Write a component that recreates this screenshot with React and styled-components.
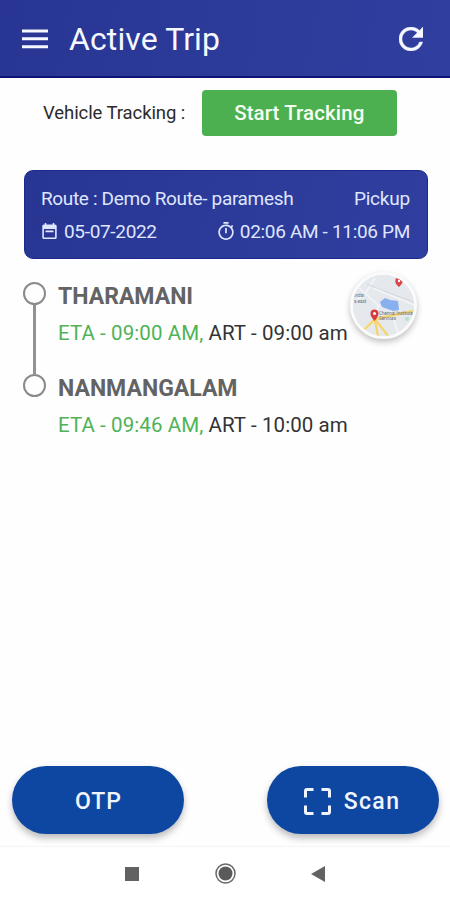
import React from 'react';
import styled, { createGlobalStyle } from 'styled-components';

const GlobalStyle = createGlobalStyle`
  * { box-sizing: border-box; }
  body {
    margin: 0;
    background: #fefefe;
    font-family: Roboto, sans-serif;
  }
  svg { display: block; flex: none; }
`;

const Screen = styled.div`
  width: 450px;
  height: 900px;
  display: flex;
  flex-direction: column;
  overflow: hidden;
`;

const AppBar = styled.header`
  height: 78px;
  flex: none;
  display: flex;
  align-items: center;
  padding: 2px 27.5px 0 22px;
  background: linear-gradient(100deg, #283593, #303f9f);
  border-bottom: 2px solid #0c1474;
  color: #f6f8ff;
`;

const Title = styled.h1`
  flex: 1;
  margin: 0 0 0 21px;
  font-size: 32px;
  font-weight: 400;
  line-height: 40px;
  letter-spacing: 0.1px;
`;

const TrackingRow = styled.section`
  display: flex;
  align-items: center;
  height: 46px;
  margin: 11.5px 53.5px 0 43px;
  justify-content: space-between;
`;

const TrackingLabel = styled.span`
  font-size: 18.5px;
  color: #2b2b2b;
  letter-spacing: -0.08px;
  white-space: nowrap;
`;

const TrackingButton = styled.button`
  width: 194.5px;
  height: 46px;
  border: 0;
  border-radius: 4px;
  background: #4caf50;
  color: #f5fff2;
  font: 500 20.5px Roboto, sans-serif;
  letter-spacing: 0.1px;
  padding: 0;
`;

const RouteCard = styled.section`
  margin: 34.5px 22.5px 0 23.5px;
  height: 89px;
  padding: 10.5px 16.5px;
  display: flex;
  flex-direction: column;
  border-radius: 9px;
  border: 1px solid #1c2a8c;
  background: linear-gradient(100deg, #283593, #303f9f);
`;

const CardRow = styled.div`
  height: 33px;
  flex: none;
  display: flex;
  align-items: center;
  justify-content: space-between;
  color: #dfe6ff;
`;

const CardText = styled.span`
  display: flex;
  align-items: center;
  gap: 6px;
  font-size: 19px;
  white-space: nowrap;
  letter-spacing: ${(p) => p.$spacing || 0}px;
`;

const TripBody = styled.section`
  display: flex;
  justify-content: space-between;
  padding: 23px 33px 0 23px;
  height: 185px;
`;

const Stops = styled.ol`
  list-style: none;
  margin: 0;
  padding: 0;
`;

const Stop = styled.li`
  display: flex;
  height: 92px;
`;

const Rail = styled.div`
  width: 23px;
  margin-right: 12px;
  display: flex;
  flex-direction: column;
  align-items: center;
`;

const Node = styled.span`
  width: 23px;
  height: 23px;
  flex: none;
  border: 2.5px solid #8a8a8a;
  border-radius: 50%;
`;

const Connector = styled.span`
  width: 2.5px;
  flex: 1;
  background: #929292;
`;

const StopInfo = styled.div`
  display: flex;
  flex-direction: column;
  padding-top: 1px;
  white-space: nowrap;
`;

const StopName = styled.span`
  font-size: 23px;
  font-weight: 700;
  line-height: 28px;
  color: #636363;
`;

const Times = styled.span`
  margin-top: 9px;
  font-size: 20.5px;
  line-height: 26px;
  color: #333;
  letter-spacing: 0.09px;
`;

const Eta = styled.span`
  color: #4fb257;
`;

const MapButton = styled.button`
  width: 67px;
  height: 67px;
  margin-top: -10px;
  padding: 0;
  border: 3px solid #fbfbfb;
  border-radius: 50%;
  overflow: hidden;
  background: #e5e8ec;
  box-shadow: 0 3px 6px rgba(0, 0, 0, 0.25);
`;

const Actions = styled.footer`
  margin-top: auto;
  height: 80px;
  flex: none;
  display: flex;
  justify-content: space-between;
  padding: 0 11px 0 12px;
`;

const ActionButton = styled.button`
  width: 172px;
  height: 68px;
  display: flex;
  align-items: center;
  justify-content: center;
  gap: 13px;
  padding: 2px ${(p) => p.$shift || 0}px 0 1px;
  border: 0;
  border-radius: 34px;
  background: #0d47a1;
  color: #f0f5ff;
  font: 500 23px Roboto, sans-serif;
  letter-spacing: ${(p) => p.$spacing}px;
  box-shadow: 0 4px 7px rgba(0, 0, 0, 0.27);
`;

const SystemNav = styled.nav`
  height: 54px;
  flex: none;
  display: flex;
  align-items: center;
  padding-left: 125px;
  border-top: 1px solid #f5f5f5;
  background: #fff;
`;

const NavKey = styled.span`
  margin-right: ${(p) => p.$after || 0}px;
`;

const MenuIcon = () => (
  <svg width="26" height="20" viewBox="0 0 26 20" fill="currentColor">
    <path d="M0 .5h26v3H0zM0 8.3h26v3H0zM0 16.2h26v3H0z" />
  </svg>
);

const RefreshIcon = () => (
  <svg width="24" height="24" viewBox="4 4 16 16" fill="currentColor" stroke="currentColor" strokeWidth=".3">
    <path d="M17.65 6.35C16.2 4.9 14.21 4 12 4c-4.42 0-7.99 3.58-7.99 8s3.57 8 7.99 8c3.73 0 6.84-2.55 7.73-6h-2.08c-.82 2.33-3.04 4-5.65 4-3.31 0-6-2.69-6-6s2.69-6 6-6c1.66 0 3.14.69 4.22 1.78L13 11h7V4l-2.35 2.35z" />
  </svg>
);

const CalendarIcon = () => (
  <svg width="17" height="16" viewBox="2 2 20 20" fill="currentColor">
    <path d="M19 4h-1V2h-2v2H8V2H6v2H5c-1.1 0-2 .9-2 2v14c0 1.1.9 2 2 2h14c1.1 0 2-.9 2-2V6c0-1.1-.9-2-2-2zm0 16H5V9.5h14V20zM7 11.5h10v2H7z" />
  </svg>
);

const TimerIcon = () => (
  <svg width="16" height="18" viewBox="3 1 18 21" fill="currentColor">
    <path d="M15 1H9v2h6V1zm-4 13h2V8h-2v6zm8.03-6.61 1.42-1.42c-.43-.51-.9-.99-1.41-1.41l-1.42 1.42C16.07 4.74 14.12 4 12 4c-4.97 0-9 4.03-9 9s4.02 9 9 9 9-4.03 9-9c0-2.12-.74-4.07-1.97-5.61zM12 20c-3.87 0-7-3.13-7-7s3.13-7 7-7 7 3.13 7 7-3.13 7-7 7z" />
  </svg>
);

const ScanIcon = () => (
  <svg width="27" height="27" viewBox="0 0 27 27" fill="none" stroke="currentColor" strokeWidth="3">
    <path d="M1.5 9.5V3Q1.5 1.5 3 1.5H9.5M17.5 1.5H24Q25.5 1.5 25.5 3V9.5M25.5 17.5V24Q25.5 25.5 24 25.5H17.5M9.5 25.5H3Q1.5 25.5 1.5 24V17.5" />
  </svg>
);

const MapPicture = () => (
  <svg width="61" height="61" viewBox="0 0 61 61">
    <rect width="61" height="61" fill="#e5e8ec" />
    <path d="M5 12L26 31L19 43M22 3L12 19L0 28M20 13L61 30M38 35L46 61" stroke="#f4f6f8" strokeWidth="1.5" fill="none" />
    <path d="M14 9L36 18L61 27" stroke="#d3d7dd" strokeWidth="1" fill="none" />
    <path d="M27 27L32 23L37 25L45 26L46 35L40 36L29 32Z" fill="#89b0ee" />
    <path d="M10 56L22 44L35 61M22 44L61 36M22 46L25 61" stroke="#f5d66d" strokeWidth="2.3" fill="none" />
    <circle cx="54" cy="44" r="2" fill="#b8e2c8" />
    <path d="M46 12C43 9.500 42.300 8 42.300 6a3.700 3.700 0 0 1 7.400 0C49.700 8 48.500 9.500 46 12Z" fill="#dc4448" />
    <circle cx="46" cy="6" r="1.200" fill="#fff" />
    <path d="M21.500 46C18.500 42 17.500 41 17.500 38.500a4 4 0 0 1 8 0C25.500 41 24 43 21.500 46Z" fill="#d83b3f" />
    <circle cx="21.500" cy="38.500" r="1.500" fill="#fff" />
    <g fontFamily="Roboto, sans-serif" fontSize="4.500" fill="#657180">
      <text x="0" y="22">andar</text>
      <text x="1" y="28">a east</text>
      <text x="26" y="40">Chennai Institute</text>
      <text x="26" y="44.500">Services</text>
    </g>
  </svg>
);

const stops = [
  { name: 'THARAMANI', eta: '09:00 AM', art: '09:00 am' },
  { name: 'NANMANGALAM', eta: '09:46 AM', art: '10:00 am' },
];

export default function App() {
  return (
    <Screen>
      <GlobalStyle />
      <AppBar>
        <MenuIcon />
        <Title>Active Trip</Title>
        <RefreshIcon />
      </AppBar>
      <TrackingRow>
        <TrackingLabel>Vehicle Tracking :</TrackingLabel>
        <TrackingButton>Start Tracking</TrackingButton>
      </TrackingRow>
      <RouteCard>
        <CardRow>
          <CardText $spacing={-0.34}>Route : Demo Route- paramesh</CardText>
          <CardText $spacing={-0.2}>Pickup</CardText>
        </CardRow>
        <CardRow>
          <CardText $spacing={-0.32}><CalendarIcon />05-07-2022</CardText>
          <CardText $spacing={-0.32}><TimerIcon />02:06 AM - 11:06 PM</CardText>
        </CardRow>
      </RouteCard>
      <TripBody>
        <Stops>
          {stops.map((stop, i) => (
            <Stop key={stop.name}>
              <Rail>
                <Node />
                {i < stops.length - 1 && <Connector />}
              </Rail>
              <StopInfo>
                <StopName>{stop.name}</StopName>
                <Times><Eta>ETA - {stop.eta},</Eta> ART - {stop.art}</Times>
              </StopInfo>
            </Stop>
          ))}
        </Stops>
        <MapButton aria-label="Map"><MapPicture /></MapButton>
      </TripBody>
      <Actions>
        <ActionButton $spacing={1}>OTP</ActionButton>
        <ActionButton $spacing={1.4} $shift={3}><ScanIcon />Scan</ActionButton>
      </Actions>
      <SystemNav>
        <NavKey $after={76}>
          <svg width="14" height="14"><rect width="14" height="14" fill="#626262" /></svg>
        </NavKey>
        <NavKey $after={75}>
          <svg width="21" height="21" viewBox="0 0 21 21">
            <circle cx="10.500" cy="10.500" r="9.500" fill="none" stroke="#686868" strokeWidth="1.500" />
            <circle cx="10.500" cy="10.500" r="7" fill="#5a5a5a" />
          </svg>
        </NavKey>
        <NavKey>
          <svg width="14" height="16"><path d="M14 0V16L0 8Z" fill="#626262" /></svg>
        </NavKey>
      </SystemNav>
    </Screen>
  );
}
